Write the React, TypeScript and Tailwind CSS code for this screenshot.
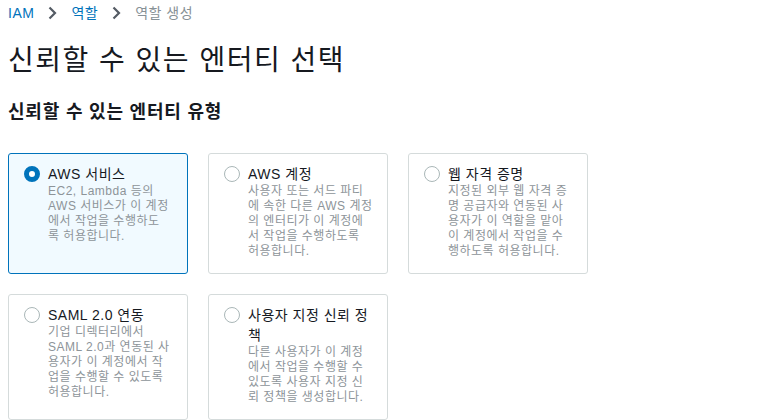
import React from "react";

type Entity = {
  id: string;
  title: string[];
  desc: string[];
};

const ROW_ONE: Entity[] = [
  {
    id: "aws-service",
    title: ["AWS 서비스"],
    desc: ["EC2, Lambda 등의", "AWS 서비스가 이 계정", "에서 작업을 수행하도", "록 허용합니다."],
  },
  {
    id: "aws-account",
    title: ["AWS 계정"],
    desc: ["사용자 또는 서드 파티", "에 속한 다른 AWS 계정", "의 엔터티가 이 계정에", "서 작업을 수행하도록", "허용합니다."],
  },
  {
    id: "web-identity",
    title: ["웹 자격 증명"],
    desc: ["지정된 외부 웹 자격 증", "명 공급자와 연동된 사", "용자가 이 역할을 맡아", "이 계정에서 작업을 수", "행하도록 허용합니다."],
  },
];

const ROW_TWO: Entity[] = [
  {
    id: "saml",
    title: ["SAML 2.0 연동"],
    desc: ["기업 디렉터리에서", "SAML 2.0과 연동된 사", "용자가 이 계정에서 작", "업을 수행할 수 있도록", "허용합니다."],
  },
  {
    id: "custom",
    title: ["사용자 지정 신뢰 정", "책"],
    desc: ["다른 사용자가 이 계정", "에서 작업을 수행할 수", "있도록 사용자 지정 신", "뢰 정책을 생성합니다."],
  },
];

function Chevron() {
  return (
    <svg width="9" height="14" viewBox="0 0 9 14" className="mx-3.5 shrink-0" aria-hidden="true">
      <polyline points="1.5,1.5 7,7 1.5,12.5" fill="none" stroke="#545b64" strokeWidth="2.2" />
    </svg>
  );
}

function Radio({ checked }: { checked: boolean }) {
  return checked ? (
    <span className="mt-0.5 h-4 w-4 shrink-0 rounded-full border-[5px] border-[#0073bb] bg-white" />
  ) : (
    <span className="mt-0.5 h-4 w-4 shrink-0 rounded-full border border-[#aab7b8] bg-white" />
  );
}

function EntityTile({ entity, selected }: { entity: Entity; selected: boolean }) {
  return (
    <div
      className={`flex gap-2 rounded-[3px] border pt-2.5 pb-3.5 pl-[15px] pr-3 ${
        selected ? "border-[#0073bb] bg-[#f1faff]" : "border-[#d5dbdb] bg-white"
      }`}
    >
      <Radio checked={selected} />
      <div className="min-w-0">
        <div className="text-[14px] leading-[20px] tracking-[0.5px] text-[#16191f] whitespace-nowrap">
          {entity.title.map((t) => (
            <div key={t}>{t}</div>
          ))}
        </div>
        <div className="text-[12px] leading-[15px] tracking-[0.5px] text-[#8d9499] whitespace-nowrap">
          {entity.desc.map((d) => (
            <div key={d}>{d}</div>
          ))}
        </div>
      </div>
    </div>
  );
}

export default function App() {
  return (
    <div className="h-[420px] w-[764px] overflow-hidden bg-white px-2 pt-[3px] font-['Liberation_Sans','Noto_Sans_CJK_KR',sans-serif]">
      {/* Breadcrumb */}
      <nav className="flex items-center text-[14px] leading-[20px] tracking-[0.5px]">
        <span className="text-[#0073bb]">IAM</span>
        <Chevron />
        <span className="text-[#0073bb]">역할</span>
        <Chevron />
        <span className="text-[#879196]">역할 생성</span>
      </nav>

      <h1 className="mt-5 text-[28px] leading-[36px] font-normal tracking-[1.5px] text-[#16191f]">
        신뢰할 수 있는 엔터티 선택
      </h1>

      <h2 className="mt-[21px] text-[18px] leading-[24px] font-bold tracking-[0.8px] text-[#16191f]">
        신뢰할 수 있는 엔터티 유형
      </h2>

      <div className="mt-[29px] grid grid-cols-[180px_180px_180px] gap-5">
        {ROW_ONE.map((e) => (
          <EntityTile key={e.id} entity={e} selected={e.id === "aws-service"} />
        ))}
        {ROW_TWO.map((e) => (
          <EntityTile key={e.id} entity={e} selected={false} />
        ))}
      </div>
    </div>
  );
}
